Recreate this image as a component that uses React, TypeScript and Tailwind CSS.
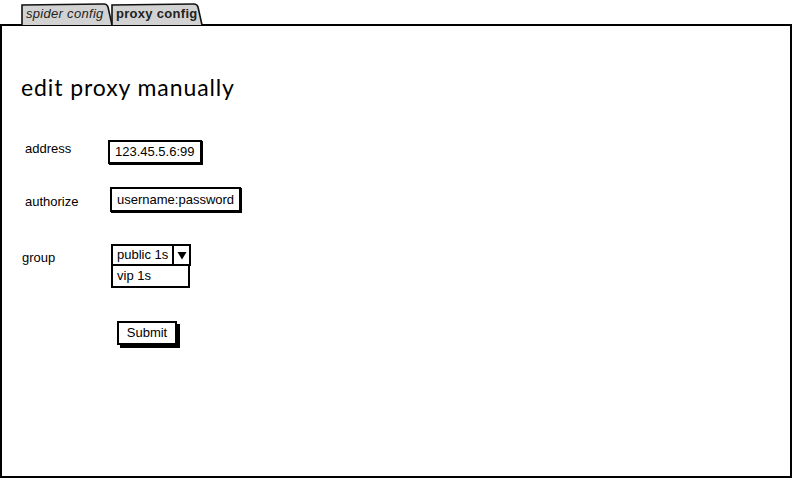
import React from "react";

function Tab({ label, active }: { label: string; active?: boolean }) {
  return (
    <div className="relative h-[22px] w-[92px] -mr-[2px]">
      <svg className="absolute inset-0" width="92" height="22" viewBox="0 0 92 22">
        <path
          d="M1 22 L1 2 L83 1 Q86 1 87 4 L91 22"
          fill="#d2d2d2"
          stroke="#111"
          strokeWidth="1.6"
        />
      </svg>
      <span
        className={
          active
            ? "relative block pl-[5px] pt-[3px] text-[13px] font-bold leading-[16px] tracking-[0.3px] text-[#222]"
            : "relative block pl-[5px] pt-[3px] text-[13px] italic leading-[16px] tracking-[0.3px] text-[#222]"
        }
      >
        {label}
      </span>
    </div>
  );
}

export default function App() {
  return (
    <div className="w-[793px] h-[480px] bg-white font-['Liberation_Sans',sans-serif] text-black overflow-hidden">
      <div className="flex pl-[21px] pt-[3px]">
        <Tab label="spider config" />
        <Tab label="proxy config" active />
      </div>

      <div className="w-[792px] h-[454px] border-2 border-black -mt-[1px]">
        <h1 className="ml-[19px] mt-[47px] text-[23px] leading-[28px] font-['Lato',sans-serif] tracking-[0.9px]">
          edit proxy manually
        </h1>

        {/* address */}
        <div className="flex items-start mt-[39px]">
          <span className="ml-[23px] w-[83px] pt-[1px] text-[13px] leading-[15px]">address</span>
          <div className="w-[94px] h-[24px] border-2 border-black shadow-[1px_1px_0_#000] flex items-center pl-[5px] text-[13px]">
            123.45.5.6:99
          </div>
        </div>

        {/* authorize */}
        <div className="flex items-start mt-[23px]">
          <span className="ml-[23px] w-[85px] pt-[7px] text-[13px] leading-[15px]">authorize</span>
          <div className="w-[131px] h-[25px] border-2 border-black shadow-[1px_1px_0_#000] flex items-center pl-[5px] text-[13px]">
            username:password
          </div>
        </div>

        {/* group */}
        <div className="flex items-start mt-[32px]">
          <span className="ml-[20px] w-[89px] pt-[6px] text-[13px] leading-[15px]">group</span>
          <div className="flex flex-col">
            <div className="flex w-[80px] h-[22px] border-2 border-black">
              <span className="flex-1 pl-[4px] text-[13px] leading-[18px]">public 1s</span>
              <span className="w-[17px] border-l-2 border-black flex items-center justify-center">
                <svg width="10" height="9" viewBox="0 0 10 9">
                  <path d="M0.5 1 L9.5 1 L5 8.5 Z" fill="#000" />
                </svg>
              </span>
            </div>
            <div className="w-[79px] h-[22px] border-2 border-t-0 border-black pl-[4px] text-[13px] leading-[20px]">
              vip 1s
            </div>
          </div>
        </div>

        {/* submit */}
        <div className="ml-[115px] mt-[32px]">
          <button className="w-[60px] h-[24px] border-2 border-black bg-white shadow-[3px_3px_0_#000] text-[13px] leading-[18px]">
            Submit
          </button>
        </div>
      </div>
    </div>
  );
}
